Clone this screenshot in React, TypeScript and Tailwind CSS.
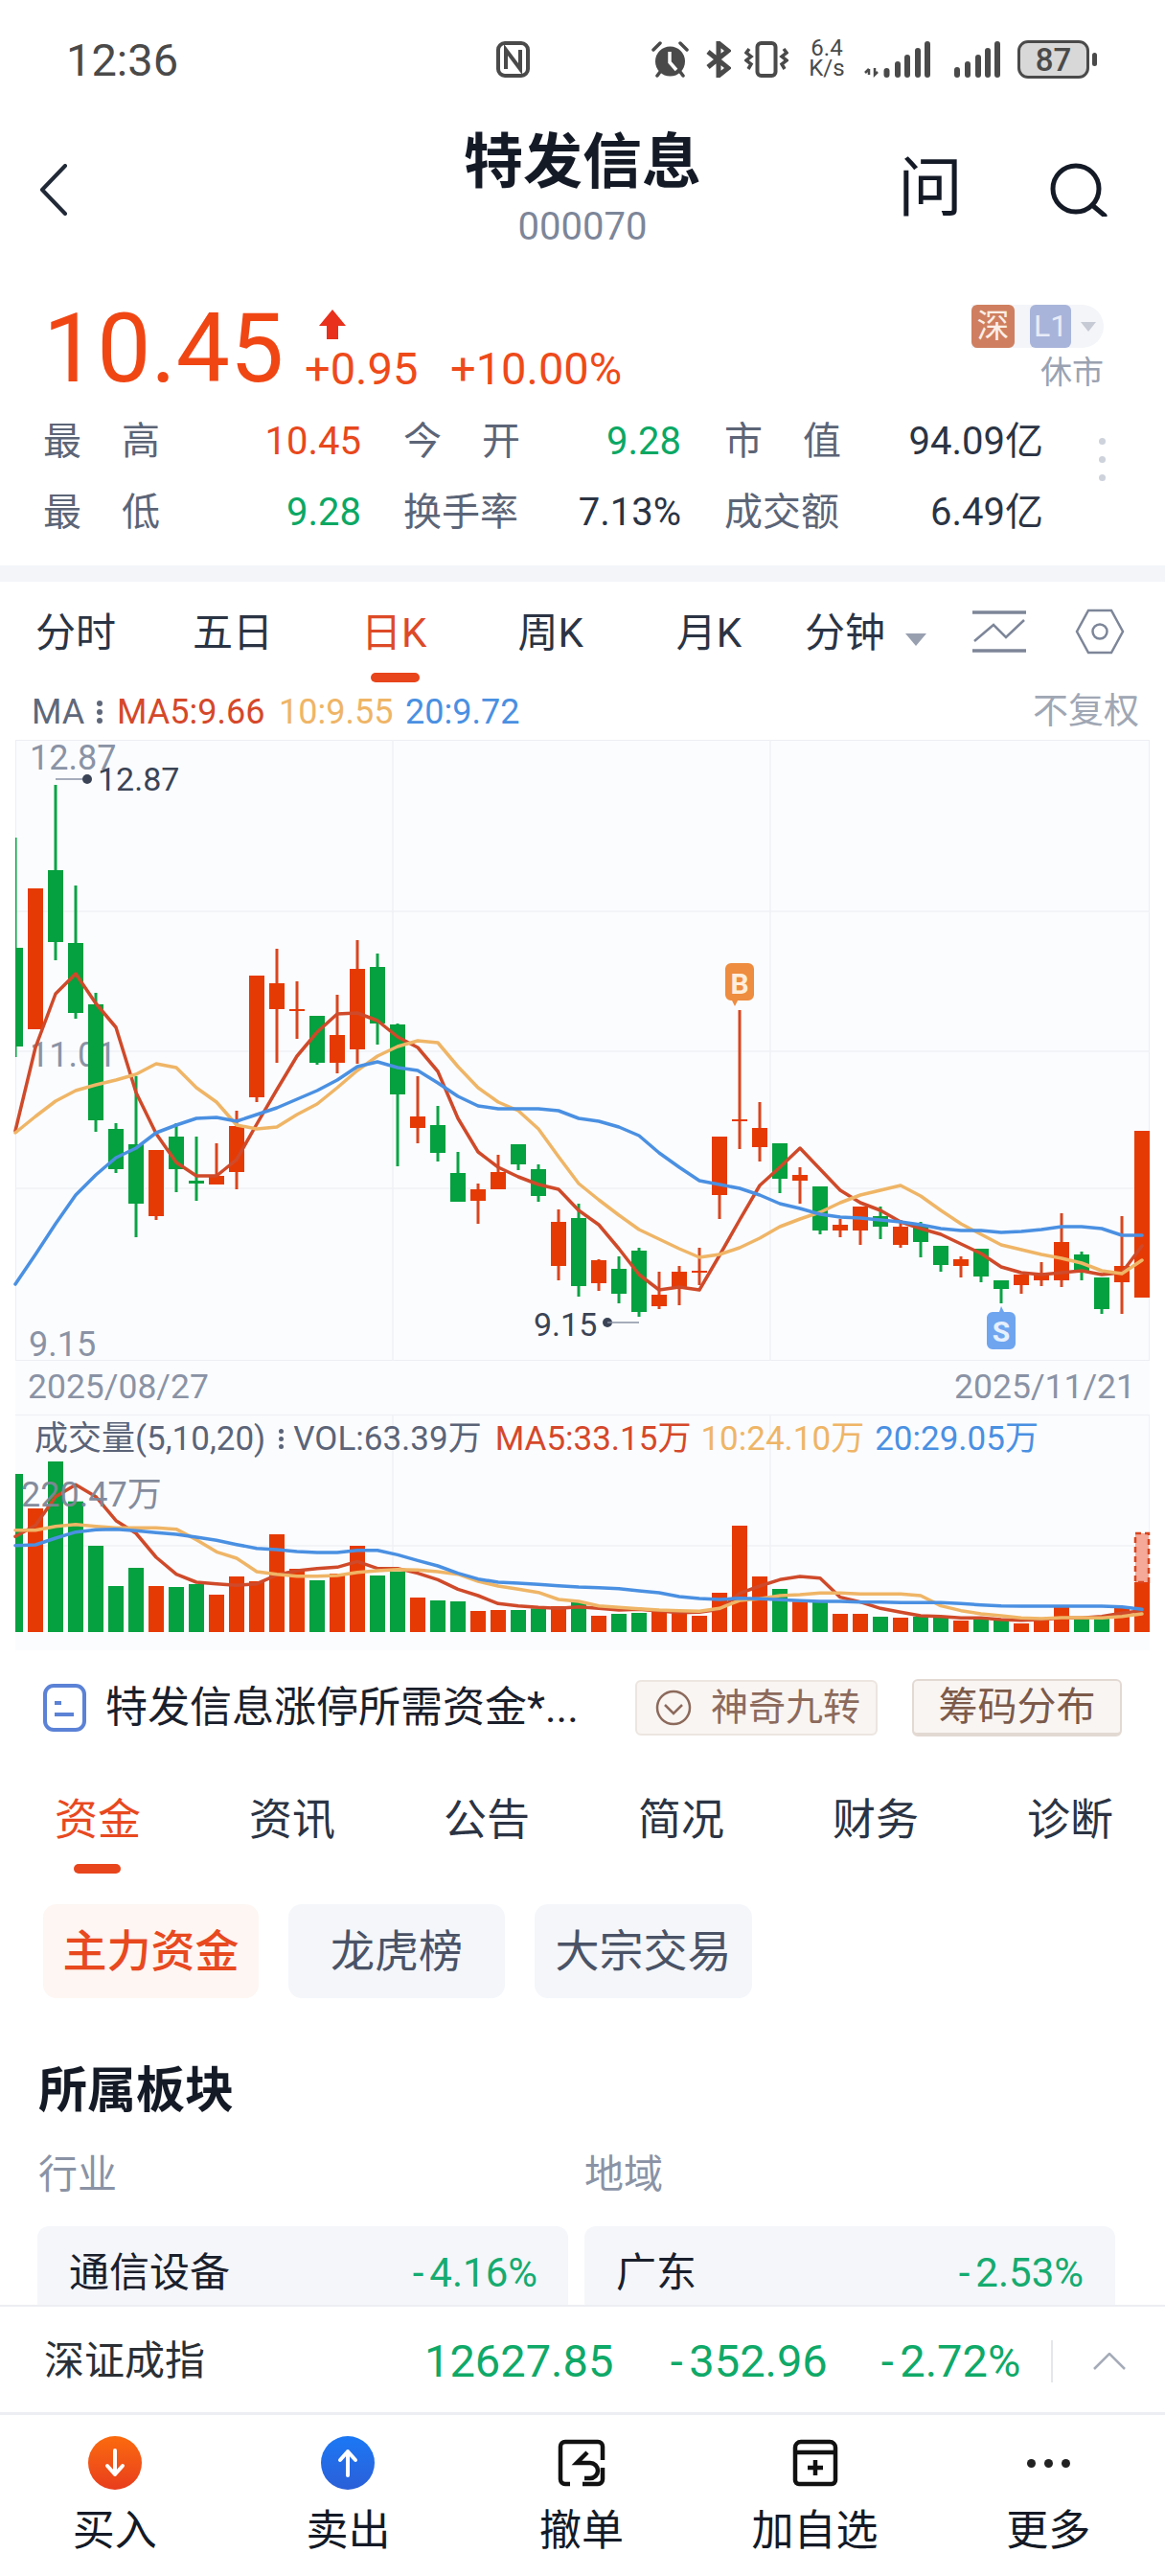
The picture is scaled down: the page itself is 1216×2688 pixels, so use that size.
import React from 'react';

const RED = '#e63a04';
const GREEN = '#05a03f';

// [color, wickTop, bodyTop, bodyBottom, wickBottom]  in page pixels
const candles: [string, number, number, number, number][] = [
  ['g', 874, 989, 1092, 1103], ['r', 927, 927, 1074, 1074], ['g', 819, 908, 983, 1002], ['g', 924, 984, 1057, 1063],
  ['g', 1036, 1048, 1169, 1181], ['g', 1172, 1178, 1220, 1224], ['g', 1123, 1194, 1256, 1291], ['r', 1200, 1200, 1269, 1273],
  ['g', 1172, 1186, 1220, 1244], ['g', 1186, 1232, 1235, 1253], ['r', 1193, 1227, 1236, 1236], ['r', 1159, 1175, 1223, 1241],
  ['r', 1018, 1018, 1145, 1150], ['r', 990, 1026, 1053, 1109], ['r', 1024, 1053, 1055, 1084], ['g', 1060, 1060, 1109, 1111],
  ['r', 1038, 1080, 1109, 1120], ['r', 981, 1011, 1095, 1110], ['g', 995, 1009, 1068, 1090], ['g', 1068, 1069, 1142, 1217],
  ['r', 1123, 1165, 1177, 1193], ['g', 1154, 1174, 1203, 1212], ['g', 1202, 1224, 1254, 1254], ['r', 1235, 1241, 1253, 1277],
  ['r', 1205, 1223, 1241, 1241], ['g', 1194, 1194, 1215, 1221], ['g', 1215, 1220, 1248, 1254], ['r', 1262, 1275, 1321, 1336],
  ['g', 1256, 1271, 1342, 1353], ['r', 1314, 1315, 1339, 1347], ['g', 1311, 1324, 1350, 1360], ['g', 1302, 1305, 1369, 1374],
  ['r', 1327, 1351, 1363, 1366], ['r', 1321, 1327, 1345, 1362], ['r', 1302, 1326, 1328, 1341], ['r', 1186, 1186, 1247, 1272],
  ['r', 1054, 1168, 1170, 1199], ['r', 1150, 1177, 1197, 1212], ['g', 1193, 1193, 1230, 1245], ['r', 1218, 1226, 1232, 1256],
  ['g', 1238, 1238, 1284, 1288], ['r', 1272, 1278, 1284, 1291], ['r', 1259, 1259, 1284, 1299], ['g', 1259, 1269, 1280, 1293],
  ['r', 1273, 1280, 1299, 1302], ['g', 1275, 1278, 1296, 1312], ['g', 1300, 1300, 1320, 1327], ['r', 1311, 1314, 1321, 1333],
  ['g', 1303, 1303, 1332, 1338], ['g', 1336, 1336, 1345, 1360], ['r', 1330, 1330, 1341, 1350], ['r', 1317, 1330, 1336, 1342],
  ['r', 1266, 1296, 1336, 1343], ['g', 1306, 1309, 1327, 1336], ['g', 1333, 1333, 1366, 1371], ['r', 1269, 1321, 1338, 1371],
  ['r', 1180, 1180, 1354, 1354],
];

const ma5 = [1180, 1093, 1037, 1016, 1047, 1072, 1140, 1183, 1213, 1227, 1227, 1210, 1173, 1137, 1102, 1077, 1058, 1057, 1065, 1082, 1093, 1118, 1167, 1202, 1218, 1228, 1236, 1241, 1263, 1278, 1303, 1330, 1346, 1343, 1346, 1310, 1273, 1237, 1218, 1198, 1220, 1242, 1255, 1263, 1275, 1282, 1288, 1298, 1308, 1322, 1328, 1330, 1328, 1326, 1330, 1328, 1300];
const ma10 = [1182, 1165, 1149, 1138, 1132, 1127, 1121, 1110, 1114, 1135, 1150, 1174, 1178, 1176, 1163, 1152, 1135, 1117, 1102, 1092, 1086, 1088, 1113, 1135, 1150, 1159, 1178, 1207, 1235, 1252, 1268, 1283, 1293, 1303, 1312, 1309, 1302, 1292, 1280, 1272, 1265, 1255, 1247, 1242, 1237, 1248, 1263, 1277, 1288, 1299, 1304, 1309, 1313, 1318, 1326, 1329, 1315];
const ma20 = [1340, 1309, 1277, 1247, 1226, 1208, 1198, 1182, 1174, 1167, 1166, 1170, 1163, 1156, 1147, 1138, 1127, 1113, 1108, 1114, 1117, 1130, 1144, 1154, 1157, 1157, 1157, 1159, 1167, 1170, 1176, 1185, 1203, 1218, 1232, 1236, 1240, 1247, 1256, 1261, 1267, 1270, 1271, 1273, 1275, 1278, 1282, 1284, 1284, 1286, 1285, 1283, 1280, 1280, 1282, 1289, 1289];

// volume: top of each bar, and the three averages, in zoomed units (page y = 1470 + v / 3)
const volTops = [204, 312, 165, 290, 429, 555, 498, 555, 558, 549, 582, 525, 540, 393, 501, 537, 516, 429, 522, 510, 591, 600, 603, 633, 630, 630, 625, 618, 606, 648, 642, 639, 636, 640, 648, 576, 366, 525, 564, 604, 606, 642, 642, 651, 654, 651, 651, 663, 660, 663, 672, 660, 621, 657, 657, 624, 543];
const volMa5 = [400, 365, 275, 238, 275, 350, 390, 465, 518, 543, 548, 553, 548, 520, 507, 500, 496, 478, 500, 500, 515, 535, 565, 585, 610, 617, 622, 625, 620, 625, 630, 628, 633, 638, 637, 628, 578, 555, 535, 525, 530, 590, 605, 625, 637, 648, 650, 655, 655, 660, 662, 660, 655, 655, 650, 640, 632];
const volMa10 = [380, 380, 368, 362, 368, 373, 373, 373, 377, 410, 448, 468, 510, 518, 524, 524, 522, 512, 507, 503, 505, 510, 518, 540, 555, 565, 575, 597, 603, 617, 622, 626, 630, 632, 634, 625, 600, 595, 585, 582, 577, 577, 580, 580, 580, 585, 617, 632, 642, 648, 655, 657, 654, 654, 655, 650, 642];
const volMa20 = [428, 426, 405, 386, 379, 377, 382, 388, 393, 402, 412, 425, 437, 441, 447, 450, 450, 443, 443, 457, 475, 492, 515, 533, 543, 546, 550, 554, 558, 560, 563, 570, 576, 588, 594, 597, 593, 595, 598, 601, 603, 603, 605, 605, 607, 607, 607, 610, 614, 617, 618, 618, 618, 618, 618, 620, 628];

const xAt = (i: number) => 16 + 21 * i;
const volY = (v: number) => 1470 + v / 3;

// first candle is cut by the panel's left edge
function Bar({ i, top, bottom, fill, half }: { i: number; top: number; bottom: number; fill: string; half: number }) {
  const left = Math.max(16, xAt(i) - half);
  return <rect x={left} y={top} width={xAt(i) + half - left} height={bottom - top} fill={fill} />;
}

function MaLine({ ys, color }: { ys: number[]; color: string }) {
  const points = ys.map((y, i) => `${xAt(i)},${y}`).join(' ');
  return <polyline points={points} fill="none" stroke={color} strokeWidth={3.5} strokeLinejoin="round" strokeLinecap="round" />;
}

function Neg({ value }: { value: string }) {
  return (
    <span className="whitespace-nowrap">
      <span className="inline-block w-[.56em] text-center">-</span>
      {value}
    </span>
  );
}

function PriceChart() {
  return (
    <svg viewBox="16 772 1184 648" className="block w-[1184px] h-[648px] overflow-visible">
      <rect x="16.5" y="772.5" width="1183" height="647" fill="none" stroke="#eceef3" />
      <path d="M16 951H1200M16 1097H1200M16 1240H1200M410 772V1420M804 772V1420" stroke="#eff1f5" strokeWidth={1.5} />
      <text x="31" y="803" fontSize="36" fill="#8a93a5">12.87</text>
      <text x="31" y="1113" fontSize="36" fill="#8a93a5">11.01</text>
      <text x="30" y="1415" fontSize="36" fill="#8a93a5">9.15</text>
      {candles.map(([c, wt, bt, bb, wb], i) => (
        <g key={i}>
          <Bar i={i} top={wt} bottom={wb} half={1.5} fill={c === 'r' ? '#d9451f' : '#0aa345'} />
          <Bar i={i} top={bt} bottom={bb} half={8} fill={c === 'r' ? RED : GREEN} />
        </g>
      ))}
      <MaLine ys={ma5} color="#cf4a2a" />
      <MaLine ys={ma10} color="#efb566" />
      <MaLine ys={ma20} color="#4a90e2" />
      <path d="M58 813H91" stroke="#8a93a5" strokeWidth={1.5} />
      <circle cx="91" cy="813" r="5" fill="#3a4456" />
      <text x="102" y="825" fontSize="34" fill="#3a4456">12.87</text>
      <text x="557" y="1394" fontSize="34" fill="#3a4456">9.15</text>
      <circle cx="634" cy="1380" r="5" fill="#3a4456" />
      <path d="M634 1380H667" stroke="#8a93a5" strokeWidth={1.5} />
      <path d="M763 1005h18a6 6 0 0 1 6 6v27a6 6 0 0 1-6 6h-11l-3 6-3-6h-1a6 6 0 0 1-6-6v-27a6 6 0 0 1 6-6z" fill="#ee8c3f" />
      <text x="772" y="1037" fontSize="30" fontWeight="700" textAnchor="middle" fill="#fdeedd">B</text>
      <path d="M1036 1369h7l2-6 3 6h6a6 6 0 0 1 6 6v27a6 6 0 0 1-6 6h-18a6 6 0 0 1-6-6v-27a6 6 0 0 1 6-6z" fill="#6fa5ef" />
      <text x="1045" y="1400" fontSize="30" fontWeight="700" textAnchor="middle" fill="#e6f0fd">S</text>
    </svg>
  );
}

function VolumeChart() {
  return (
    <svg viewBox="16 1476 1184 246" className="block w-[1184px] h-[246px] overflow-visible">
      <path d="M16 1476.5H1200M16 1613H1200M410 1476V1703M804 1476V1703" stroke="#eff1f5" strokeWidth={1.5} />
      <path d="M1199.5 1476V1703" stroke="#eff1f5" />
      {volTops.map((v, i) => (
        <Bar key={i} i={i} top={volY(v)} bottom={1703} half={8} fill={candles[i][0] === 'r' ? RED : GREEN} />
      ))}
      <rect x="1185" y="1600" width="14" height="51" fill="#f5a998" stroke="#d9451f" strokeWidth={2.5} strokeDasharray="6 4" />
      <MaLine ys={volMa5.map(volY)} color="#cf4a2a" />
      <MaLine ys={volMa10.map(volY)} color="#efb566" />
      <MaLine ys={volMa20.map(volY)} color="#4a90e2" />
      <text x="22" y="1572" fontSize="36" fill="#7e8797" opacity="0.95">220.47万</text>
    </svg>
  );
}

function StatusBar() {
  return (
    <div className="flex items-center h-[124px] pl-[69px] text-[#4a4a4a]">
      <div className="w-[449px] text-[47px] leading-none">12:36</div>
      <svg viewBox="0 0 35 38" className="w-[35px] h-[38px]">
        <rect x="2" y="2" width="31" height="34" rx="7" fill="none" stroke="#4a4a4a" strokeWidth="4" />
        <path d="M10 29V9l15 20V9" fill="none" stroke="#4a4a4a" strokeWidth="4" />
      </svg>
      <svg viewBox="0 0 41 38" className="ml-[126px] w-[41px] h-[38px]">
        <circle cx="20.5" cy="21" r="15.5" fill="#4a4a4a" />
        <path d="M20 11v11l7 8" fill="none" stroke="#fff" strokeWidth="3.5" />
        <path d="M3 9l7-7M38 9l-7-7M7 36l3-4M34 36l-3-4" stroke="#4a4a4a" strokeWidth="3.5" strokeLinecap="round" />
      </svg>
      <svg viewBox="0 0 27 38" className="ml-[16px] w-[27px] h-[38px]">
        <path d="M3 11l21 17-10 8V2l10 8L3 27" fill="none" stroke="#4a4a4a" strokeWidth="5" />
      </svg>
      <svg viewBox="0 0 46 38" className="ml-[14px] w-[46px] h-[38px]">
        <rect x="13.5" y="2" width="19" height="34" rx="4" fill="none" stroke="#4a4a4a" strokeWidth="4" />
        <path d="M5 8l-3 4 5 4-5 4 5 4-3 5M41 8l3 4-5 4 5 4-5 4 3 5" fill="none" stroke="#4a4a4a" strokeWidth="3.5" />
      </svg>
      <div className="ml-[21px] w-[38px] flex flex-col items-center text-[24px] leading-[21px] -mt-[2px]">
        <span>6.4</span>
        <span>K/s</span>
      </div>
      <svg viewBox="0 0 71 38" className="ml-[19px] w-[71px] h-[38px]">
        <path d="M6 35V29M2 33l4-4M12 28v7l3-3" fill="none" stroke="#4a4a4a" strokeWidth="2.5" />
        <path d="M24.5 35V31M36 35V24M46 35V17M57 35V10M67 35V3" stroke="#4a4a4a" strokeWidth="6" strokeLinecap="round" />
      </svg>
      <svg viewBox="0 0 49 38" className="ml-[24px] w-[49px] h-[38px]">
        <path d="M3 35V30M14 35V24M25 35V17M35 35V10M45 35V3" stroke="#4a4a4a" strokeWidth="6" strokeLinecap="round" />
      </svg>
      <div className="ml-[17px] flex items-center">
        <div className="w-[75px] h-[40px] rounded-[11px] border-[3px] border-[#4a4a4a] bg-[#d8d8d8] flex items-center justify-center text-[33px] font-medium leading-none">87</div>
        <div className="ml-[3px] w-[5px] h-[14px] rounded-full bg-[#4a4a4a]" />
      </div>
    </div>
  );
}

function Header() {
  return (
    <div className="relative h-[144px] flex flex-col items-center">
      <div className="text-[62px] leading-[70px] font-bold text-[#141a26] mt-[11px]">特发信息</div>
      <div className="text-[40px] leading-[44px] text-[#7d8699] mt-[10px]">000070</div>
      <svg viewBox="0 0 30 54" className="absolute left-[41px] top-[47px] w-[30px] h-[54px]">
        <path d="M27 2L3 27l24 25" fill="none" stroke="#222a38" strokeWidth="4" strokeLinecap="round" strokeLinejoin="round" />
      </svg>
      <div className="absolute left-[937px] top-[35px] text-[68px] leading-[76px] text-[#141a26]">问</div>
      <svg viewBox="0 0 60 56" className="absolute left-[1096px] top-[46px] w-[60px] h-[56px]">
        <circle cx="27" cy="27" r="24" fill="none" stroke="#141a26" strokeWidth="5" />
        <path d="M44 44l13 11" fill="none" stroke="#141a26" strokeWidth="5" strokeLinecap="round" />
      </svg>
    </div>
  );
}

const stats = [
  [['最', '高'], '10.45', 'text-[#e8481c]', ['今', '开'], '9.28', 'text-[#0ba864]', ['市', '值'], '94.09亿', 'text-[#2b3444]'],
  [['最', '低'], '9.28', 'text-[#0ba864]', ['换手率'], '7.13%', 'text-[#2b3444]', ['成交额'], '6.49亿', 'text-[#2b3444]'],
] as const;

function Label({ parts }: { parts: readonly string[] }) {
  return (
    <span className="flex justify-between w-[122px] text-[#5c6577]">
      {parts.map((p) => (
        <span key={p}>{p}</span>
      ))}
    </span>
  );
}

function Quote() {
  return (
    <div className="h-[322px] pl-[45px] flex flex-col">
      <div className="flex h-[146px]">
        <div className="w-[273px] text-[100px] leading-none text-[#f04614] mt-[46px]">10.45</div>
        <div className="flex flex-col">
          <svg viewBox="0 0 30 34" className="w-[30px] h-[34px] ml-[14px] mt-[54px]">
            <path d="M15 1l14 17H21v14H9V18H1z" fill="#e8301c" />
          </svg>
          <div className="flex text-[47px] leading-none text-[#ee4a1a] mt-[5px]">
            <span className="w-[152px]">+0.95</span>
            <span>+10.00%</span>
          </div>
        </div>
        <div className="ml-auto mr-[64px] mt-[50px] flex flex-col items-end">
          <div className="flex h-[45px] items-center rounded-r-full rounded-l-[8px] bg-[#f4f5f9]">
            <span className="w-[45px] h-[45px] rounded-[6px] bg-[#cf7f5f] text-[#fbeee6] text-[34px] leading-[45px] text-center">深</span>
            <span className="ml-[16px] w-[43px] h-[45px] rounded-[6px] bg-[#a8b4da] text-[#e8ecf8] text-[32px] leading-[45px] text-center">L1</span>
            <span className="ml-[10px] mr-[8px] w-0 h-0 border-x-[8px] border-t-[10px] border-x-transparent border-t-[#c6cad4]" />
          </div>
          <div className="text-[33px] leading-[34px] text-[#9aa2b1] mt-[9px]">休市</div>
        </div>
      </div>
      <div className="flex flex-col text-[40px] leading-[46px] mt-[24px] gap-[28px] relative">
        {stats.map((r, idx) => (
          <div key={idx} className="flex items-center">
            <div className="w-[332px] flex justify-between">
              <Label parts={r[0]} />
              <span className={r[2]}>{r[1]}</span>
            </div>
            <div className="w-[290px] ml-[44px] flex justify-between">
              <Label parts={r[3]} />
              <span className={r[5]}>{r[4]}</span>
            </div>
            <div className="w-[333px] ml-[45px] flex justify-between">
              <Label parts={r[6]} />
              <span className={r[8]}>{r[7]}</span>
            </div>
          </div>
        ))}
        <div className="absolute left-[1102px] top-[19px] flex flex-col gap-[12px]">
          <span className="w-[7px] h-[7px] rounded-full bg-[#cdd2db]" />
          <span className="w-[7px] h-[7px] rounded-full bg-[#cdd2db]" />
          <span className="w-[7px] h-[7px] rounded-full bg-[#cdd2db]" />
        </div>
      </div>
    </div>
  );
}

function PeriodTabs() {
  return (
    <div className="relative h-[106px] flex items-center text-[42px] leading-none text-[#2b3444] pt-[2px]">
      <span className="ml-[37px]">分时</span>
      <span className="ml-[80px]">五日</span>
      <span className="ml-[92px] text-[#dd4a28]">日K</span>
      <span className="ml-[95px]">周K</span>
      <span className="ml-[97px]">月K</span>
      <span className="ml-[66px]">分钟</span>
      <span className="ml-[21px] mt-[12px] w-0 h-0 border-x-[11px] border-t-[13px] border-x-transparent border-t-[#98a0b0]" />
      <svg viewBox="0 0 56 44" className="ml-[48px] w-[56px] h-[44px] -mt-[4px]">
        <path d="M0 2H56M0 42H56" stroke="#7d8699" strokeWidth="3.5" />
        <path d="M2 32L22 15l13 13L54 10" fill="none" stroke="#7d8699" strokeWidth="2.5" />
      </svg>
      <svg viewBox="0 0 52 48" className="ml-[51px] w-[52px] h-[48px] -mt-[4px]">
        <path d="M14 2h24l12 22-12 22H14L2 24z" fill="none" stroke="#7d8699" strokeWidth="2.5" />
        <circle cx="26" cy="24" r="7.5" fill="none" stroke="#7d8699" strokeWidth="2.5" />
      </svg>
      <div className="absolute left-[387px] top-[95px] w-[51px] h-[10px] rounded-full bg-[#e8451c]" />
    </div>
  );
}

function MaRow() {
  return (
    <div className="h-[59px] flex items-center text-[36px] leading-none pl-[33px]">
      <span className="text-[#5f687a] w-[55px]">MA</span>
      <span className="flex flex-col gap-[3px] ml-[13px] w-[21px]">
        <i className="w-[6px] h-[6px] rounded-full bg-[#5f687a]" />
        <i className="w-[6px] h-[6px] rounded-full bg-[#5f687a]" />
        <i className="w-[6px] h-[6px] rounded-full bg-[#5f687a]" />
      </span>
      <span className="text-[#d5482a] w-[169px]">MA5:9.66</span>
      <span className="text-[#efb566] w-[132px]">10:9.55</span>
      <span className="text-[#4a90e2]">20:9.72</span>
      <span className="ml-auto mr-[27px] text-[37px] text-[#a0a7b4]">不复权</span>
    </div>
  );
}

function ChartPanel() {
  return (
    <div className="ml-[16px] w-[1184px] bg-[#fbfcfe]">
      <PriceChart />
      <div className="h-[56px] flex items-center justify-between pl-[13px] pr-[15px] text-[35.5px] leading-none text-[#8a93a5]">
        <span>2025/08/27</span>
        <span>2025/11/21</span>
      </div>
      <div className="relative">
        <VolumeChart />
        <div className="absolute left-[20px] top-[6px] h-[38px] flex items-center text-[35px] leading-none whitespace-nowrap">
          <span className="text-[#5b6478]">成交量(5,10,20)</span>
          <span className="flex flex-col gap-[3px] ml-[14px] mr-[10px]">
            <i className="w-[5px] h-[5px] rounded-full bg-[#5b6478]" />
            <i className="w-[5px] h-[5px] rounded-full bg-[#5b6478]" />
            <i className="w-[5px] h-[5px] rounded-full bg-[#5b6478]" />
          </span>
          <span className="text-[#5b6478]">VOL:63.39万</span>
          <span className="text-[#d5482a] ml-[14px]">MA5:33.15万</span>
          <span className="text-[#efb566] ml-[10px]">10:24.10万</span>
          <span className="text-[#4a90e2] ml-[11px]">20:29.05万</span>
        </div>
      </div>
    </div>
  );
}

function InfoRow() {
  return (
    <div className="h-[118px] flex items-center pl-[45px]">
      <svg viewBox="0 0 45 50" className="w-[45px] h-[50px]">
        <rect x="2" y="2" width="41" height="46" rx="9" fill="none" stroke="#5b82d6" strokeWidth="4" />
        <path d="M12 20h7M12 32h20" stroke="#5b82d6" strokeWidth="4" />
      </svg>
      <span className="ml-[20px] w-[553px] text-[44px] leading-none text-[#1a202c] whitespace-nowrap">特发信息涨停所需资金*...</span>
      <div className="w-[253px] h-[58px] rounded-[6px] border-2 border-[#ece5e0] bg-[#f9f5f2] flex items-center pl-[19px] text-[39px] leading-none text-[#8c6a5c]">
        <svg viewBox="0 0 38 38" className="w-[38px] h-[38px]">
          <circle cx="19" cy="19" r="17" fill="none" stroke="#8c6a5c" strokeWidth="2.5" />
          <path d="M10 16l9 9 9-9" fill="none" stroke="#8c6a5c" strokeWidth="2.5" />
        </svg>
        <span className="ml-[20px]">神奇九转</span>
      </div>
      <div className="ml-[36px] w-[219px] h-[60px] rounded-[6px] border-2 border-b-[4px] border-[#e3d9d3] bg-[#f9f5f2] flex items-center justify-center text-[41px] leading-none text-[#7c5a4a]">筹码分布</div>
    </div>
  );
}

function ContentTabs() {
  const tabs = ['资金', '资讯', '公告', '简况', '财务', '诊断'];
  return (
    <div className="relative h-[146px] flex text-[45px] leading-none text-[#2b3444] pl-[57px] pt-[36px]">
      {tabs.map((t, i) => (
        <span key={t} className={i === 0 ? 'w-[203px] shrink-0 text-[#e8491f]' : 'w-[203px] shrink-0'}>{t}</span>
      ))}
      <div className="absolute left-[77px] top-[104px] w-[49px] h-[10px] rounded-full bg-[#e8451c]" />
    </div>
  );
}

function SubTabs() {
  return (
    <div className="h-[98px] flex pl-[45px] gap-[31px] text-[46px] leading-none">
      <div className="w-[225px] rounded-[14px] bg-[#fdf6f2] flex items-center justify-center font-medium text-[#e8491f]">主力资金</div>
      <div className="w-[226px] rounded-[14px] bg-[#f4f6fa] flex items-center justify-center text-[#4a5366]">龙虎榜</div>
      <div className="w-[227px] rounded-[14px] bg-[#f4f6fa] flex items-center justify-center text-[#4a5366]">大宗交易</div>
    </div>
  );
}

function Sectors() {
  return (
    <div className="h-[320px] overflow-hidden pl-[40px]">
      <div className="text-[51px] leading-[60px] font-bold text-[#141a26] mt-[67px]">所属板块</div>
      <div className="flex text-[41px] leading-[48px] text-[#8a93a5] mt-[33px]">
        <span className="w-[570px]">行业</span>
        <span>地域</span>
      </div>
      <div className="flex gap-[17px] -ml-[1px] mt-[30px] text-[42px] leading-none">
        <div className="w-[554px] h-[120px] rounded-[12px] bg-[#f4f6fa] flex justify-between pl-[33px] pr-[32px] pt-[28px] text-[#1a202c]">
          <span>通信设备</span>
          <span className="text-[#16ab70]"><Neg value="4.16%" /></span>
        </div>
        <div className="w-[554px] h-[120px] rounded-[12px] bg-[#f4f6fa] flex justify-between pl-[33px] pr-[33px] pt-[28px] text-[#1a202c]">
          <span>广东</span>
          <span className="text-[#16ab70]"><Neg value="2.53%" /></span>
        </div>
      </div>
    </div>
  );
}

function IndexBar() {
  return (
    <div className="h-[115px] border-t-2 border-b-[3px] border-[#eceef3] flex items-center pl-[46px] pt-[3px] bg-white">
      <span className="w-[397px] text-[42px] leading-none text-[#2b3036]">深证成指</span>
      <div className="flex text-[47px] leading-none text-[#0fa968]">
        <span className="w-[250px]">12627.85</span>
        <span className="w-[220px]"><Neg value="352.96" /></span>
        <span className="w-[184px]"><Neg value="2.72%" /></span>
      </div>
      <div className="w-[2px] h-[44px] bg-[#e4e6eb]" />
      <svg viewBox="0 0 34 18" className="ml-[42px] w-[34px] h-[18px]">
        <path d="M1 17L17 1l16 16" fill="none" stroke="#a5abb8" strokeWidth="2.5" />
      </svg>
    </div>
  );
}

function BottomNav() {
  const items = [
    {
      label: '买入',
      icon: (
        <div className="w-[56px] h-[56px] rounded-full bg-gradient-to-b from-[#fb6a0c] to-[#e83c1c] flex items-center justify-center">
          <svg viewBox="0 0 24 32" className="w-[24px] h-[32px]">
            <path d="M12 3v25M4 19l8 9 8-9" fill="none" stroke="#fff" strokeWidth="4" strokeLinecap="round" strokeLinejoin="round" />
          </svg>
        </div>
      ),
    },
    {
      label: '卖出',
      icon: (
        <div className="w-[56px] h-[56px] rounded-full bg-gradient-to-b from-[#1a78f5] to-[#2a5fd8] flex items-center justify-center">
          <svg viewBox="0 0 24 32" className="w-[24px] h-[32px]">
            <path d="M12 29V4M4 13l8-9 8 9" fill="none" stroke="#fff" strokeWidth="4" strokeLinecap="round" strokeLinejoin="round" />
          </svg>
        </div>
      ),
    },
    {
      label: '撤单',
      icon: (
        <svg viewBox="0 0 50 50" className="w-[50px] h-[50px]">
          <path d="M13 47H8a5 5 0 0 1-5-5V8a5 5 0 0 1 5-5h34a5 5 0 0 1 5 5v14M47 30v12a5 5 0 0 1-5 5H26" fill="none" stroke="#111" strokeWidth="4.5" />
          <path d="M31 14L20 25h14a8 8 0 0 1 0 16h-6" fill="none" stroke="#111" strokeWidth="4.5" />
        </svg>
      ),
    },
    {
      label: '加自选',
      icon: (
        <svg viewBox="0 0 50 50" className="w-[50px] h-[50px]">
          <path d="M10 3h30a6 6 0 0 1 6 6v34a4 4 0 0 1-4 4H8a4 4 0 0 1-4-4V9a6 6 0 0 1 6-6zM4 14h42" fill="none" stroke="#111" strokeWidth="4.5" />
          <path d="M25 22v16M17 30h16" fill="none" stroke="#111" strokeWidth="4.5" />
        </svg>
      ),
    },
    {
      label: '更多',
      icon: (
        <div className="flex gap-[9px]">
          <span className="w-[9px] h-[9px] rounded-full bg-[#222]" />
          <span className="w-[9px] h-[9px] rounded-full bg-[#222]" />
          <span className="w-[9px] h-[9px] rounded-full bg-[#222]" />
        </div>
      ),
    },
  ];
  return (
    <div className="grid grid-cols-5 h-[168px] bg-white -ml-[2px]">
      {items.map((it) => (
        <div key={it.label} className="flex flex-col items-center">
          <div className="h-[56px] mt-[22px] flex items-center justify-center">{it.icon}</div>
          <span className="mt-[18px] text-[44px] leading-[50px] text-[#141a26]">{it.label}</span>
        </div>
      ))}
    </div>
  );
}

export default function App() {
  return (
    <div className="w-[1216px] h-[2688px] overflow-hidden bg-white [font-family:Roboto,'Noto_Sans_CJK_SC',sans-serif]">
      <StatusBar />
      <Header />
      <Quote />
      <div className="h-[17px] bg-[#f3f5f9]" />
      <PeriodTabs />
      <MaRow />
      <ChartPanel />
      <div className="h-[1px]" />
      <InfoRow />
      <ContentTabs />
      <SubTabs />
      <Sectors />
      <IndexBar />
      <BottomNav />
    </div>
  );
}
